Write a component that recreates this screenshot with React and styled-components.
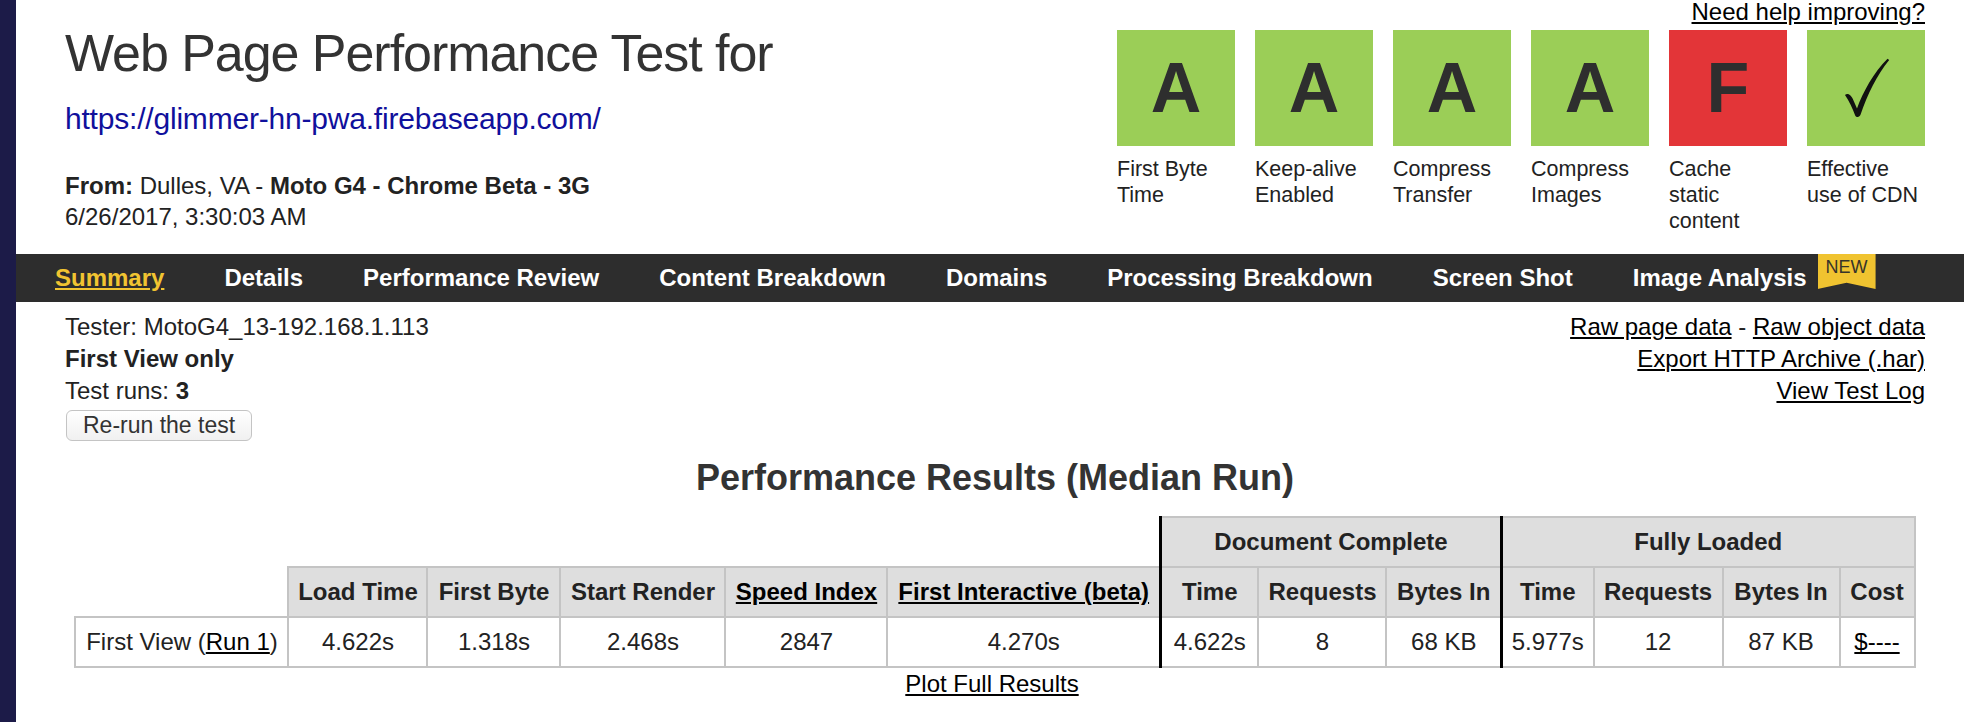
import React from 'react';
import styled, { createGlobalStyle } from 'styled-components';

const GlobalStyle = createGlobalStyle`
  html, body { margin: 0; padding: 0; background: #fff; }
  body {
    font-family: "Liberation Sans", Arial, Helvetica, sans-serif;
    color: #222;
  }
`;

const Shell = styled.div`
  display: flex;
  min-height: 722px;
`;

const SideBar = styled.div`
  flex: 0 0 16px;
  background: #1c1b48;
`;

const Page = styled.div`
  flex: 1;
  min-width: 0;
`;

const Header = styled.header`
  display: flex;
  justify-content: space-between;
  height: 254px;
  padding: 0 39px 0 49px;
  box-sizing: border-box;
`;

const TitleBlock = styled.div`
  display: flex;
  flex-direction: column;
  align-items: flex-start;
`;

const Title = styled.h1`
  margin: 23px 0 0;
  font-size: 52px;
  line-height: 60px;
  font-weight: normal;
  color: #333;
  letter-spacing: -1.05px;
  white-space: nowrap;
`;

const UrlLink = styled.a`
  margin-top: 18px;
  font-size: 30px;
  line-height: 36px;
  color: #10109c;
  text-decoration: none;
  letter-spacing: -0.2px;
`;

const TestMeta = styled.div`
  margin-top: 33px;
  font-size: 24px;
  line-height: 31px;
`;

const GradePanel = styled.div`
  display: flex;
  flex-direction: column;
  align-items: flex-end;
`;

const HelpLink = styled.a`
  font-size: 24px;
  line-height: 24px;
  color: #000;
  text-decoration: underline;
`;

const GradeRow = styled.div`
  display: flex;
  gap: 20px;
  margin-top: 6px;
`;

const Grade = styled.div`
  width: 118px;
  display: flex;
  flex-direction: column;
`;

const GradeBox = styled.div`
  height: 116px;
  background: ${p => (p.$fail ? '#e33538' : '#9bce57')};
  display: flex;
  align-items: center;
  justify-content: center;
  font-size: 70px;
  font-weight: bold;
  line-height: 1;
  color: #2e2e2e;
`;

const GradeLabel = styled.div`
  margin-top: 9.5px;
  font-size: 21.5px;
  line-height: 26px;
  color: #222;
`;

const Nav = styled.nav`
  display: flex;
  gap: 60px;
  height: 48px;
  padding-left: 39px;
  background: #2d2d2d;
`;

const NavItem = styled.a`
  display: flex;
  align-items: center;
  font-size: 24px;
  font-weight: bold;
  white-space: nowrap;
  text-decoration: none;
  color: ${p => (p.$active ? '#f1c431' : '#fff')};
`;

const NavLabel = styled.span`
  text-decoration: ${p => (p.$active ? 'underline' : 'none')};
`;

const NewBadge = styled.span`
  align-self: flex-start;
  display: flex;
  justify-content: center;
  margin-left: 11px;
  width: 58px;
  height: 35px;
  padding-top: 3px;
  box-sizing: border-box;
  background: #f0c330;
  color: #36342a;
  font-size: 18px;
  font-weight: normal;
  line-height: 20px;
  clip-path: polygon(0 0, 100% 0, 100% 100%, 50% 82%, 0 100%);
`;

const Content = styled.main`
  padding: 0 39px 0 49px;
`;

const InfoRow = styled.div`
  display: flex;
  justify-content: space-between;
  margin-top: 9px;
  font-size: 24px;
  line-height: 32px;
`;

const InfoCol = styled.div`
  display: flex;
  flex-direction: column;
  align-items: flex-start;
`;

const LinkCol = styled.div`
  text-align: right;
`;

const PlainLink = styled.a`
  color: #000;
  text-decoration: underline;
`;

const RerunButton = styled.button`
  margin: 3px 0 0 1px;
  height: 31px;
  padding: 0 16px;
  font-family: "Liberation Sans", Arial, sans-serif;
  font-size: 23px;
  line-height: 1;
  color: #333;
  background: linear-gradient(#ffffff, #f0f0f0);
  border: 1px solid #c4c4c4;
  border-radius: 6px;
`;

const SectionTitle = styled.h2`
  margin: 16px 0 0;
  text-align: center;
  font-size: 36px;
  line-height: 42px;
  font-weight: bold;
  color: #333;
`;

const Results = styled.table`
  margin: 17px auto 0;
  width: 1839px;
  table-layout: fixed;
  border-collapse: collapse;
  font-size: 24px;
  color: #222;
`;

const HeadCell = styled.th`
  height: 48px;
  padding: 0;
  background: #dedede;
  border: 2px solid #c4c4c4;
  border-left: ${p => (p.$split ? '3px solid #000' : '2px solid #c4c4c4')};
  font-weight: bold;
  text-align: center;
  white-space: nowrap;
`;

const BlankCell = styled.th`
  padding: 0;
  border: none;
  background: transparent;
`;

const DataCell = styled.td`
  height: 48px;
  padding: 0;
  border: 2px solid #c4c4c4;
  border-left: ${p => (p.$split ? '3px solid #000' : '2px solid #c4c4c4')};
  text-align: center;
  white-space: nowrap;
`;

const PlotRow = styled.div`
  text-align: center;
  font-size: 24px;
  line-height: 32px;
  padding-right: 6px;
`;

const CheckMark = () => (
  <svg width="47" height="60" viewBox="0 0 47 60" aria-hidden="true">
    <path
      d="M2 37 C5 34.5 8.5 37.5 10.5 42.5 L14 50.5 C20 34 31 14 44.5 0.8 L46.2 2 C34 17 24.5 36 17.6 56.6 C16.6 59.6 13.4 59.8 12.2 57.4 C9.4 50.4 6.2 43 2 37 Z"
      fill="#111"
    />
  </svg>
);

const grades = [
  { mark: 'A', lines: ['First Byte', 'Time'] },
  { mark: 'A', lines: ['Keep-alive', 'Enabled'] },
  { mark: 'A', lines: ['Compress', 'Transfer'] },
  { mark: 'A', lines: ['Compress', 'Images'] },
  { mark: 'F', fail: true, lines: ['Cache', 'static', 'content'] },
  { mark: 'check', lines: ['Effective', 'use of CDN'] },
];

const navItems = [
  'Summary',
  'Details',
  'Performance Review',
  'Content Breakdown',
  'Domains',
  'Processing Breakdown',
  'Screen Shot',
  'Image Analysis',
];

const colWidths = [213, 139, 133, 165, 162, 273, 98, 128, 115, 92, 129, 117, 75];

export default function App() {
  return (
    <>
      <GlobalStyle />
      <Shell>
        <SideBar />
        <Page>
          <Header>
            <TitleBlock>
              <Title>Web Page Performance Test for</Title>
              <UrlLink href="#">https://glimmer-hn-pwa.firebaseapp.com/</UrlLink>
              <TestMeta>
                <div>
                  <b>From:</b> Dulles, VA - <b>Moto G4 - Chrome Beta - 3G</b>
                </div>
                <div>6/26/2017, 3:30:03 AM</div>
              </TestMeta>
            </TitleBlock>
            <GradePanel>
              <HelpLink href="#">Need help improving?</HelpLink>
              <GradeRow>
                {grades.map((g, i) => (
                  <Grade key={i}>
                    <GradeBox $fail={g.fail}>
                      {g.mark === 'check' ? <CheckMark /> : g.mark}
                    </GradeBox>
                    <GradeLabel>
                      {g.lines.map((l, j) => (
                        <div key={j}>{l}</div>
                      ))}
                    </GradeLabel>
                  </Grade>
                ))}
              </GradeRow>
            </GradePanel>
          </Header>

          <Nav>
            {navItems.map((item, i) => (
              <NavItem key={item} href="#" $active={i === 0}>
                <NavLabel $active={i === 0}>{item}</NavLabel>
                {item === 'Image Analysis' && <NewBadge>NEW</NewBadge>}
              </NavItem>
            ))}
          </Nav>

          <Content>
            <InfoRow>
              <InfoCol>
                <div>Tester: MotoG4_13-192.168.1.113</div>
                <div>
                  <b>First View only</b>
                </div>
                <div>
                  Test runs: <b>3</b>
                </div>
                <RerunButton>Re-run the test</RerunButton>
              </InfoCol>
              <LinkCol>
                <div>
                  <PlainLink href="#">Raw page data</PlainLink> -{' '}
                  <PlainLink href="#">Raw object data</PlainLink>
                </div>
                <div>
                  <PlainLink href="#">Export HTTP Archive (.har)</PlainLink>
                </div>
                <div>
                  <PlainLink href="#">View Test Log</PlainLink>
                </div>
              </LinkCol>
            </InfoRow>

            <SectionTitle>Performance Results (Median Run)</SectionTitle>

            <Results>
              <colgroup>
                {colWidths.map((w, i) => (
                  <col key={i} style={{ width: w }} />
                ))}
              </colgroup>
              <thead>
                <tr>
                  <BlankCell colSpan={6} />
                  <HeadCell colSpan={3} $split>
                    Document Complete
                  </HeadCell>
                  <HeadCell colSpan={4} $split>
                    Fully Loaded
                  </HeadCell>
                </tr>
                <tr>
                  <BlankCell />
                  <HeadCell>Load Time</HeadCell>
                  <HeadCell>First Byte</HeadCell>
                  <HeadCell>Start Render</HeadCell>
                  <HeadCell>
                    <PlainLink href="#">Speed Index</PlainLink>
                  </HeadCell>
                  <HeadCell>
                    <PlainLink href="#">First Interactive (beta)</PlainLink>
                  </HeadCell>
                  <HeadCell $split>Time</HeadCell>
                  <HeadCell>Requests</HeadCell>
                  <HeadCell>Bytes In</HeadCell>
                  <HeadCell $split>Time</HeadCell>
                  <HeadCell>Requests</HeadCell>
                  <HeadCell>Bytes In</HeadCell>
                  <HeadCell>Cost</HeadCell>
                </tr>
              </thead>
              <tbody>
                <tr>
                  <DataCell>
                    First View (<PlainLink href="#">Run 1</PlainLink>)
                  </DataCell>
                  <DataCell>4.622s</DataCell>
                  <DataCell>1.318s</DataCell>
                  <DataCell>2.468s</DataCell>
                  <DataCell>2847</DataCell>
                  <DataCell>4.270s</DataCell>
                  <DataCell $split>4.622s</DataCell>
                  <DataCell>8</DataCell>
                  <DataCell>68 KB</DataCell>
                  <DataCell $split>5.977s</DataCell>
                  <DataCell>12</DataCell>
                  <DataCell>87 KB</DataCell>
                  <DataCell>
                    <PlainLink href="#">$----</PlainLink>
                  </DataCell>
                </tr>
              </tbody>
            </Results>

            <PlotRow>
              <PlainLink href="#">Plot Full Results</PlainLink>
            </PlotRow>
          </Content>
        </Page>
      </Shell>
    </>
  );
}
